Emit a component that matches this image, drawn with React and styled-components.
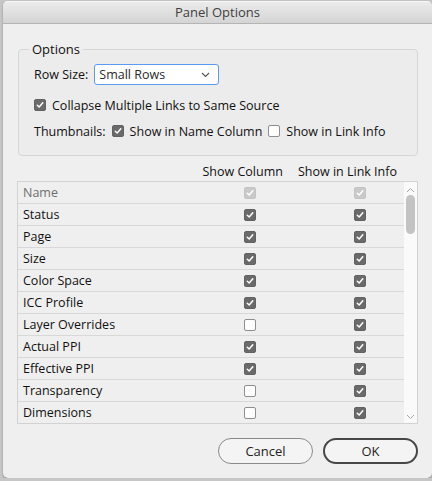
import styled, { createGlobalStyle } from "styled-components";

const GlobalStyle = createGlobalStyle`
  body {
    margin: 0;
    background: #c6c6c6;
    font-family: "Open Sans", "Liberation Sans", sans-serif;
  }
`;

const rows = [
  { name: "Name", col: true, info: true, disabled: true },
  { name: "Status", col: true, info: true },
  { name: "Page", col: true, info: true },
  { name: "Size", col: true, info: true },
  { name: "Color Space", col: true, info: true },
  { name: "ICC Profile", col: true, info: true },
  { name: "Layer Overrides", col: false, info: true },
  { name: "Actual PPI", col: true, info: true },
  { name: "Effective PPI", col: true, info: true },
  { name: "Transparency", col: false, info: true },
  { name: "Dimensions", col: false, info: true },
];

function Check({ checked, disabled }) {
  return (
    <Box $checked={checked} $disabled={disabled}>
      {checked && (
        <svg width="8" height="8" viewBox="0 0 8 8">
          <path
            d="M1.3 4.2 L3.2 6 L6.8 1.8"
            fill="none"
            stroke="#fff"
            strokeWidth="1.5"
            strokeLinecap="round"
            strokeLinejoin="round"
          />
        </svg>
      )}
    </Box>
  );
}

function Chevron({ up }) {
  return (
    <svg width="9" height="6" viewBox="0 0 9 6">
      <path
        d={up ? "M1 5 L4.5 1.5 L8 5" : "M1 1 L4.5 4.5 L8 1"}
        fill="none"
        stroke="#a8a8a8"
        strokeWidth="1"
      />
    </svg>
  );
}

export default function App() {
  return (
    <>
      <GlobalStyle />
      <Window>
        <TitleBar>Panel Options</TitleBar>
        <Body>
          <Group>
            <Legend>Options</Legend>
            <FieldRow>
              <Label>Row Size:</Label>
              <Select>
                <span>Small Rows</span>
                <svg width="9" height="6" viewBox="0 0 9 6">
                  <path d="M1 1 L4.5 4.5 L8 1" fill="none" stroke="#555" strokeWidth="1.1" />
                </svg>
              </Select>
            </FieldRow>
            <CheckRow $top={12}>
              <Check checked />
              <Label>Collapse Multiple Links to Same Source</Label>
            </CheckRow>
            <CheckRow $top={10}>
              <Label>Thumbnails:</Label>
              <Check checked />
              <Label>Show in Name Column</Label>
              <Check />
              <Label>Show in Link Info</Label>
            </CheckRow>
          </Group>

          <Headers>
            <span>Show Column</span>
            <span>Show in Link Info</span>
          </Headers>

          <Table>
            <Rows>
              {rows.map((r) => (
                <Row key={r.name}>
                  <RowName $disabled={r.disabled}>{r.name}</RowName>
                  <Cell>
                    <Check checked={r.col} disabled={r.disabled} />
                  </Cell>
                  <span />
                  <Cell>
                    <Check checked={r.info} disabled={r.disabled} />
                  </Cell>
                </Row>
              ))}
            </Rows>
            <Scrollbar>
              <Chevron up />
              <Thumb />
              <Spacer />
              <Chevron />
            </Scrollbar>
          </Table>

          <Buttons>
            <Button>Cancel</Button>
            <Button $primary>OK</Button>
          </Buttons>
        </Body>
      </Window>
    </>
  );
}

const Window = styled.div`
  margin: 1px 0 0 3px;
  width: 429px;
  height: 477px;
  background: #efefef;
  border-radius: 5px;
  overflow: hidden;
  box-shadow: 0 1px 2px rgba(0, 0, 0, 0.35);
`;

const TitleBar = styled.div`
  height: 22px;
  line-height: 22px;
  text-align: center;
  font-size: 13px;
  color: #404040;
  background: linear-gradient(#ececec, #d4d4d4);
  border-bottom: 1px solid #b4b4b4;
  box-shadow: inset 0 1px 0 #f7f7f7;
`;

const Body = styled.div`
  padding: 17px 14px 0 14px;
  font-size: 12.5px;
  color: #111;
`;

const Group = styled.fieldset`
  margin: 0 0 0 1px;
  padding: 7px 14px 16px 15px;
  min-width: 0;
  border: 1px solid #d6d6d6;
  border-radius: 4px;
  background: #ececec;
`;

const Legend = styled.legend`
  margin-left: -5px;
  padding: 0 3px;
  line-height: 16px;
  font-size: 13px;
  color: #111;
`;

const FieldRow = styled.div`
  display: flex;
  align-items: center;
  gap: 6px;
  height: 21px;
`;

const CheckRow = styled.div`
  display: flex;
  align-items: center;
  gap: 6px;
  height: 16px;
  margin-top: ${(p) => p.$top}px;
`;

const Label = styled.span`
  white-space: nowrap;
`;

const Select = styled.div`
  width: 125px;
  height: 21px;
  box-sizing: border-box;
  border: 1px solid #5b9af3;
  border-radius: 3px;
  background: #fff;
  display: flex;
  align-items: center;
  justify-content: space-between;
  padding: 0 8px 0 4px;
  color: #2a2a2a;
`;

const Box = styled.span`
  flex: none;
  width: 12px;
  height: 12px;
  box-sizing: border-box;
  border-radius: 2px;
  display: inline-flex;
  align-items: center;
  justify-content: center;
  background: ${(p) =>
    !p.$checked ? "#fff" : p.$disabled ? "#c9c9c9" : "#6a6a6a"};
  border: 1px solid
    ${(p) => (!p.$checked ? "#8e8e8e" : p.$disabled ? "#c4c4c4" : "#626262")};
`;

const Headers = styled.div`
  display: flex;
  justify-content: flex-end;
  gap: 15px;
  padding-right: 21px;
  height: 24px;
  align-items: flex-end;
  margin-bottom: 1px;
`;

const Table = styled.div`
  display: flex;
  height: 241px;
  overflow: hidden;
  border: 1px solid #d2d2d2;
  background: #efefef;
`;

const Rows = styled.div`
  flex: 1;
`;

const Row = styled.div`
  display: grid;
  grid-template-columns: 220px 24px 86px 24px;
  align-items: center;
  height: 21px;
  border-bottom: 1px solid #d8d8d8;
`;

const RowName = styled.span`
  padding-left: 5px;
  color: ${(p) => (p.$disabled ? "#6e6e6e" : "#111")};
`;

const Cell = styled.span`
  display: flex;
  justify-content: center;
`;

const Scrollbar = styled.div`
  width: 13px;
  background: #fafafa;
  display: flex;
  flex-direction: column;
  align-items: center;
  padding: 5px 0 3px;
  box-sizing: border-box;
`;

const Thumb = styled.div`
  width: 9px;
  height: 39px;
  margin-top: 2px;
  border-radius: 5px;
  background: #c3c3c3;
`;

const Spacer = styled.div`
  flex: 1;
`;

const Buttons = styled.div`
  display: flex;
  justify-content: flex-end;
  gap: 10px;
  margin-top: 14px;
`;

const Button = styled.button`
  width: 95px;
  height: 26px;
  border-radius: 13px;
  font-family: inherit;
  font-size: 13px;
  color: #222;
  background: #f4f4f4;
  border: ${(p) => (p.$primary ? "2px solid #474747" : "1px solid #8a8a8a")};
`;
